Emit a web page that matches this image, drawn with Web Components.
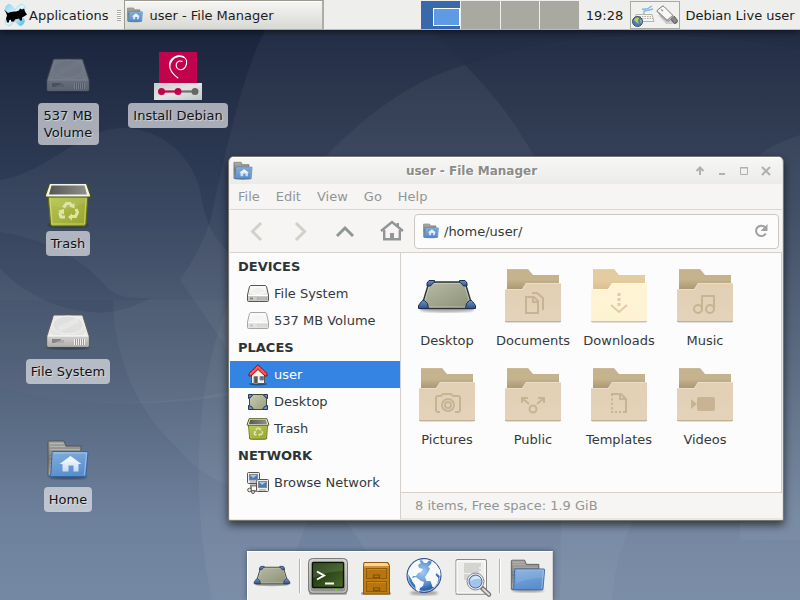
<!DOCTYPE html>
<html lang="en">
<head>
<meta charset="utf-8">
<title>Desktop</title>
<style>
  html, body { height: 100%; margin: 0; }
  body {
    font: 13px/17px "DejaVu Sans", sans-serif;
    color: #1c1c1c;
    display: flex; flex-direction: column;
    overflow: hidden;
    position: relative;
  }
</style>
</head>
<body>
<desk-wallpaper></desk-wallpaper>
<top-panel>
  <task-button icon="home-folder">user - File Manager</task-button>
  <work-pager slot="end"></work-pager>
  <time slot="clock">19:28</time>
  <span slot="user">Debian Live user</span>
</top-panel>
<desk-area>
  <desk-icon icon="drive" faded>537&nbsp;MB Volume</desk-icon>
  <desk-icon icon="trash">Trash</desk-icon>
  <desk-icon icon="drive">File System</desk-icon>
  <desk-icon icon="home-folder">Home</desk-icon>
  <desk-icon icon="installer">Install Debian</desk-icon>
  <app-window slot="window">
    <span slot="title">user - File Manager</span>
    <menu-item slot="menu">File</menu-item>
    <menu-item slot="menu">Edit</menu-item>
    <menu-item slot="menu">View</menu-item>
    <menu-item slot="menu">Go</menu-item>
    <menu-item slot="menu">Help</menu-item>
    <side-heading slot="side">DEVICES</side-heading>
    <side-item slot="side" icon="drive-small">File System</side-item>
    <side-item slot="side" icon="drive-small" faded>537 MB Volume</side-item>
    <side-heading slot="side">PLACES</side-heading>
    <side-item slot="side" icon="house" selected>user</side-item>
    <side-item slot="side" icon="desk-small">Desktop</side-item>
    <side-item slot="side" icon="trash-small">Trash</side-item>
    <side-heading slot="side">NETWORK</side-heading>
    <side-item slot="side" icon="network">Browse Network</side-item>
    <file-item icon="desktop">Desktop</file-item>
    <file-item icon="f-documents">Documents</file-item>
    <file-item icon="f-downloads">Downloads</file-item>
    <file-item icon="f-music">Music</file-item>
    <file-item icon="f-pictures">Pictures</file-item>
    <file-item icon="f-public">Public</file-item>
    <file-item icon="f-templates">Templates</file-item>
    <file-item icon="f-videos">Videos</file-item>
    <span slot="status">8 items, Free space: 1.9 GiB</span>
  </app-window>
</desk-area>
<app-dock></app-dock>

<script>
const folder = (glyph, o = {}) => `<svg viewBox="0 0 64 64"><defs>
  <linearGradient id="b" x2="0" y2="1"><stop offset="0" stop-color="${o.b1 || '#c5b38e'}"/><stop offset=".3" stop-color="${o.b1 || '#c5b38e'}"/><stop offset=".6" stop-color="${o.b2 || '#a8946f'}"/></linearGradient>
  <linearGradient id="f" x2="0" y2="1"><stop offset="0" stop-color="${o.f1 || '#e2cfb4'}"/><stop offset="1" stop-color="${o.f2 || '#e4d3ba'}"/></linearGradient></defs>
  <rect x="5" y="57" width="54" height="2" fill="#000" opacity=".12"/>
  <path d="M6 5h21l5 6h26v30H6z" fill="url(#b)"/><path d="M6 5h21" stroke="#fff" opacity=".2"/>
  <path d="M4 25h17l4-6h34q1 0 1 1v37q0 1-1 1H5q-1 0-1-1z" fill="url(#f)"/>
  <path d="M4 25.500h17.500l3.500-6h34.500" fill="none" stroke="#fff" opacity=".3"/>
  <path d="M4 57.500h56" stroke="${o.e || '#c4b092'}"/>
  <g fill="none" stroke="${o.g || '#c8b394'}" stroke-width="2">${glyph}</g></svg>`;

const blueFolder = (house) => `<svg viewBox="0 0 48 48"><defs>
  <linearGradient id="g" x2="0" y2="1"><stop offset="0" stop-color="#a5a5a1"/><stop offset=".5" stop-color="#7b7b78"/><stop offset="1" stop-color="#aaa"/></linearGradient>
  <linearGradient id="f" x2=".3" y2="1"><stop offset="0" stop-color="#83aede"/><stop offset="1" stop-color="#5a8fce"/></linearGradient>
  <linearGradient id="h" x2="0" y2="1"><stop offset="0" stop-color="#fff"/><stop offset="1" stop-color="#c6d9ef"/></linearGradient>
  <filter id="s"><feGaussianBlur stdDeviation="1"/></filter></defs>
  <ellipse cx="24" cy="41" rx="19" ry="2.500" opacity=".35" filter="url(#s)"/>
  <path d="M4 40V6q0-1 1-1h15l2 5h15v30z" fill="url(#g)" stroke="#555550"/>
  <path d="M6 7.500h13M6 10.500h15M6 13.500h30M6 17h3M6 21h3M6 25h3M6 29h3M6 33h3" stroke="#c8c8c4" opacity=".6"/>
  <path d="M9 15.500h34q1 0 1 1l-2 23q0 1-1 1H5q2-1 2-4l1-20q0-1 1-1z" fill="url(#f)" stroke="#3465a4"/>
  <path d="M10 17h32.500l-2 22" fill="none" stroke="#b7d1ef" opacity=".7"/>
  ${house ? '<path d="M26.500 20l11 8h-3v7.500h-5v-6h-5v6h-6V28h-3z" fill="url(#h)"/>' : '<path d="M9 34q10-7 34-8v-8H10z" fill="#fff" opacity=".1"/>'}</svg>`;

const trash = (small) => `<svg viewBox="${small ? '1 2 46 46' : '0 0 48 48'}"><defs>
    <linearGradient id="b" x2="1" y2="1"><stop offset="0" stop-color="#b9c954"/><stop offset="1" stop-color="#97a32e"/></linearGradient>
    <linearGradient id="i" x2="1" y2="0"><stop offset="0" stop-color="#555753"/><stop offset="1" stop-color="#8e908b"/></linearGradient>
    <filter id="s"><feGaussianBlur stdDeviation="1"/></filter></defs>
    <ellipse cx="24" cy="45" rx="20" ry="2.500" opacity=".4" filter="url(#s)"/>
    <path d="M4 14h40l-2 30q0 2-2 2H8.500q-2 0-2-2z" fill="url(#b)" stroke="#606b06" stroke-width="${small ? 2 : 1}"/>
    <path d="M6 18l2 26h32.500L42 18" fill="none" stroke="#d6e27c" opacity=".7"/>
    <path d="M8 25q16 8 33-3v-4H7z" fill="#fff" opacity=".07"/>
    <path d="M5.500 3.500h37l4 11.500v2h-45v-2z" fill="#f4f4f2" stroke="#4c5600" stroke-width="${small ? 2 : 1.2}"/>
    <path d="M7.500 5.500h33l2.500 9H5z" fill="url(#i)"/>
    <g fill="none" stroke="#dde5a8" stroke-width="3"><path d="M19.500 27.500l3-4h3.500l2 3M32 29l1.500 3.500-2 4h-4M21 37h-4l-1-3 1.500-3"/></g>
    <path d="M30.500 23v5.500l-5-2zM28 33.500v7l-4-3.500zM14 30.500l6-1.500v5.500z" fill="#dde5a8"/></svg>`;

const ICONS = {
  'home-folder': blueFolder(true),
  'folder': blueFolder(false),
  'f-documents': folder('<path d="M25 33h8l4 4v12H25z"/><path d="M32 33v5h5" stroke-width="2"/><path d="M31 29h5l6 5v12"/>'),
  'f-downloads': folder('<path d="M24 41l8 7 8-7" /><path d="M32 29v3M32 34v3M32 39v3" stroke-width="3"/>', {b1:'#e4cca2', b2:'#d9be90', f1:'#fff4d2', f2:'#fdf3d3', e:'#d9c096', g:'#e4caa4'}),
  'f-music': folder('<circle cx="25" cy="45" r="4"/><circle cx="37" cy="45" r="4"/><path d="M29 45V32h12v13"/>'),
  'f-pictures': folder('<path d="M25 49h-2q-2 0-2-2V35q0-2 2-2h3l2-2h8l2 2h5q2 0 2 2v12q0 2-2 2h-3"/><circle cx="33" cy="42" r="6"/><circle cx="33" cy="42" r="3"/>'),
  'f-public': folder('<circle cx="32" cy="46" r="3.500"/><path d="M21 40v-5h6M21 35l7 6M37 35h6v5M43 35l-7 6"/>'),
  'f-templates': folder('<path d="M24 31h10l5 5v13h-3"/><path d="M33 31v5h5" /><path d="M25 31v17" stroke-dasharray="2 2.400"/><path d="M24 49h14" stroke-dasharray="2 2"/>'),
  'f-videos': folder('<g fill="#c8b394" stroke="none"><rect x="24" y="34" width="18" height="14" rx="2"/><path d="M18 36l6 5-6 5z"/></g>'),
  'drive': `<svg viewBox="0 0 48 48"><defs>
    <linearGradient id="t" x2="0" y2="1"><stop offset="0" stop-color="#ececeb"/><stop offset="1" stop-color="#dededd"/></linearGradient>
    <linearGradient id="f" x2="0" y2="1"><stop offset="0" stop-color="#d0d0ce"/><stop offset="1" stop-color="#b0b0ad"/></linearGradient>
    <filter id="s"><feGaussianBlur stdDeviation="1"/></filter></defs>
    <ellipse cx="24" cy="39" rx="21" ry="2.500" opacity=".4" filter="url(#s)"/>
    <path d="M10.500 7h27q1 0 1.500 1.500l6 19v10.500q0 1-1 1H4q-1 0-1-1V27.500L9 8.500q.5-1.500 1.500-1.500z" fill="url(#t)" stroke="#5d5d5a"/>
    <path d="M3.500 28h41v9.500q0 1-1 1h-39q-1 0-1-1z" fill="url(#f)"/>
    <path d="M4 28h40" stroke="#fff"/><ellipse cx="24" cy="17" rx="15.500" ry="9" fill="#e0e0df" stroke="#f4f4f4" stroke-width=".8"/>
    <path d="M15 21l19-9" stroke="#fff" stroke-width="5" opacity=".25"/>
    <circle cx="7" cy="26" r=".8" fill="#fff"/><circle cx="41" cy="26" r=".8" fill="#fff"/>
    <path d="M8 31h9v4H8z" fill="#858581"/><path d="M10 35l7-3h3v3z" fill="#aaa"/>
    <path d="M30.500 31v6M32.500 31v6M34.500 31v6M36.500 31v6M38.500 31v6M40.500 31v6" stroke="#f2f2f2"/><path d="M31.500 31v6M33.500 31v6M35.500 31v6M37.500 31v6M39.500 31v6" stroke="#999"/></svg>`,
  'drive-small': `<svg viewBox="0 0 22 22"><defs><linearGradient id="t" x2="0" y2="1"><stop offset="0" stop-color="#fafafa"/><stop offset="1" stop-color="#dcdcda"/></linearGradient></defs>
    <path d="M4 2.500h14q1 0 1.500 1l2 8.500v5.500q0 1-1 1h-19q-1 0-1-1V12l2-8.500q.5-1 1.500-1z" fill="url(#t)" stroke="#555753"/><path d="M1 12.500h20" stroke="#fff"/><path d="M1 13h20v5H1z" fill="#c9c9c6"/><ellipse cx="11" cy="8" rx="7" ry="3.500" fill="#efefee" stroke="#fff" stroke-width=".7"/><path d="M3 14.500h3v2H3z" fill="#888"/><path d="M12 14v3M14 14v3M16 14v3M18 14v3" stroke="#fff"/><path d="M11 14v3M13 14v3M15 14v3M17 14v3M19 14v3" stroke="#8c8c88"/></svg>`,
  'trash': trash(false),
  'trash-small': trash(true),
  'installer': `<svg viewBox="0 0 48 48"><path d="M5 0h38v31H5z" fill="#c0034c"/><defs><linearGradient id="w" x2="1" y2="1"><stop offset="0" stop-color="#c4cccd"/><stop offset=".5" stop-color="#e2e5e5"/><stop offset="1" stop-color="#c0c6c7"/></linearGradient></defs>
    <path d="M0 31h48v17H0z" fill="url(#w)"/><path d="M7 39.500h18" stroke="#c0034c" stroke-width="2.200"/><path d="M25 39.500h16" stroke="#707070" stroke-width="2.200"/>
    <circle cx="7.500" cy="39.500" r="3.500" fill="#c0034c"/><circle cx="24" cy="39.500" r="3.500" fill="#c0034c"/><circle cx="41" cy="39.500" r="3.500" fill="#666"/>
    <path d="M24.300 26.300Q15.300 20 15.500 12.500C16 6 22 3.500 26 3.800C31 4 33.500 8 32.500 12C31.500 16 29 17.700 26.500 17.700C23 17.500 21.700 14.500 22.300 12C23 9.500 26 8.200 28.500 9.500" fill="none" stroke="#fff" stroke-width="1.100"/>
    <path d="M16 16C14.500 8 20 3.300 26 3.500Q30 3.700 31.500 6.500Q28 4.700 25 5Q17 6 16 16z" fill="#fff"/></svg>`,
  'desktop': `<svg viewBox="0 0 64 64"><defs><linearGradient id="d" x2="1" y2="1"><stop offset="0" stop-color="#babda6"/><stop offset="1" stop-color="#8b8f78"/></linearGradient>
    <linearGradient id="c" x2="0" y2="1"><stop offset="0" stop-color="#6f93c6"/><stop offset="1" stop-color="#335287"/></linearGradient><filter id="s"><feGaussianBlur stdDeviation="1.200"/></filter></defs>
    <ellipse cx="32" cy="46" rx="27" ry="2.500" opacity=".3" filter="url(#s)"/>
    <path d="M14 18h36l8 26.500H6z" fill="url(#d)" stroke="#2e3436" stroke-width="1.400"/><path d="M15 19.500h34l7 23.500H8z" fill="none" stroke="#d3d6c4" opacity=".6"/>
    <g fill="url(#c)" stroke="#1a2e56"><path d="M3.500 44.500v-3l3-4q1-2 3-1l3 3 1 5z"/><path d="M60.500 44.500v-3l-3-4q-1-2-3-1l-3 3-1 5z"/><path d="M12 22v-3l2-2.500h5.500v1.500l-3 2.500-1 1.500z"/><path d="M52 22v-3l-2-2.500h-5.500v1.500l3 2.500 1 1.500z"/></g></svg>`,
  'desk-small': `<svg viewBox="0 0 22 22"><defs><linearGradient id="d" x2="1" y2="1"><stop offset="0" stop-color="#c8ccb2"/><stop offset="1" stop-color="#989c80"/></linearGradient></defs>
    <path d="M2 4h18v14H2z" fill="#9aabc4"/><path d="M6 3.500h10l3.500 4v7l-3.500 4H6l-3.500-4v-7z" fill="url(#d)" stroke="#444a38"/><g fill="#6f8fbe" stroke="#24375d"><path d="M1.500 3.500h4l-1 2-3 2zM20.500 3.500h-4l1 2 3 2zM1.500 18.500h5l-2-3-3-1zM20.500 18.500h-5l2-3 3-1z"/></g></svg>`,
  'house': `<svg viewBox="0 0 22 22"><ellipse cx="11" cy="20" rx="9" ry="1.500" opacity=".4"/><path d="M4.500 10L11 4l6.500 6v9.500h-13z" fill="#f4f3ef" stroke="#555753"/><path d="M7 12.500h3.500v7H7z" fill="#555" stroke="#888"/><path d="M13 12.500h3.500v3.500H13z" fill="#4b6c9e" stroke="#7c8797"/>
    <path d="M11 .8L20 9.500v2.500h-2L11 5.500 4 12H2V9.500z" fill="#ef4b4b" stroke="#a40000" stroke-width=".9"/><path d="M3.500 9.800L11 2.500l7.500 7.300" fill="none" stroke="#ffb0b0" stroke-dasharray="1 1" opacity=".8"/></svg>`,
  'network': `<svg viewBox="0 0 22 22"><g fill="#eeeeec" stroke="#555753"><path d="M4 17.500v-4h5M4 19h6" fill="none" stroke="#888a85" stroke-width="2"/><rect x=".5" y=".5" width="12" height="11" rx="1"/><rect x="9.500" y="7.500" width="12" height="12" rx="1"/><circle cx="2.500" cy="18" r="1.800"/><circle cx="6" cy="20" r="1.500"/></g><rect x="2.500" y="2.500" width="8" height="5.500" fill="#4a7ab8" stroke="#888"/><rect x="11.500" y="9.500" width="8" height="6" fill="#4a7ab8" stroke="#888"/><path d="M3 3h7l-4 3zM12 10h7l-4 3z" fill="#a8c4e6"/><path d="M12 18h7M3 10h7" stroke="#999"/></svg>`,
  'xfce': `<svg viewBox="0 0 24 24"><defs><linearGradient id="x" x2="1" y2="1"><stop offset="0" stop-color="#7fd4f4"/><stop offset=".5" stop-color="#e6f6fc"/><stop offset="1" stop-color="#39b7ea"/></linearGradient></defs>
    <path d="M6 1q3 1 6 6 4-6 7-6 4 2 3 5l-5 6q4 3 5 6-2 5-5 5-2-1-5-5-4 5-6 5-4-1-4-5l5-6Q2 9 2 6q1-4 4-5z" fill="url(#x)" stroke="#8fd3ea" stroke-width=".5"/>
    <path d="M1 6.500l4 3.500q3-2 8-1.500l3-1 1-2 2 1 2-1 1 3 2 3-3 2-2 1 0 3h-2l-1-2-4 1-1 2H8l0-2-2 1v2H4l-1-4 1-3-1-3z" fill="#000"/></svg>`,
  'keyboard': `<svg viewBox="0 0 24 24"><path d="M13 11V8q6-1 9-2M11 6q5 1 10-3" fill="none" stroke="#8ab6e4" stroke-width="1.400"/><path d="M5 11.500h16l2 7H4z" fill="#f4f4f1" stroke="#b5b4ae"/><path d="M6 13.500h15M6 15.500h16" stroke="#b0b0aa" stroke-dasharray="1.500 1"/><circle cx="6.500" cy="18.500" r="5" fill="#4d7dbf" stroke="#3a4a68"/><path d="M3 17q2-4 5-2l-1 3 1 3-3-2zM9 16l2 2-1 3z" fill="#b7cf4a"/></svg>`,
  'plug': `<svg viewBox="0 0 24 24"><path d="M3 12l8 9h10l-4-6z" opacity=".15"/><path d="M15 13l5 6" stroke="#666" stroke-width="3"/><path d="M16 16.500l3.500 4q3 0 3-3L19 13" fill="#888" stroke="#555"/><path d="M9 3.500q-1-1-2 0L2.500 7q-1 1 0 2l9 8.500q2 1.500 4-1l2-2q1-1.500 0-2.500z" fill="#f8f8f7" stroke="#777"/><path d="M3 9l9 8.500 5.500-4.500" fill="none" stroke="#999" stroke-width="1.500"/><path d="M6 6.500l2 1.500" stroke="#999" stroke-width="1.500"/></svg>`,
  'terminal': `<svg viewBox="0 0 40 40"><defs><linearGradient id="m" x2="0" y2="1"><stop offset="0" stop-color="#c4c5c1"/><stop offset="1" stop-color="#8e908b"/></linearGradient><linearGradient id="g" x2="1" y2="1"><stop offset="0" stop-color="#14260c"/><stop offset="1" stop-color="#4a6b28"/></linearGradient></defs>
    <rect x="1" y="36" width="38" height="3" rx="1.500" opacity=".25"/><rect x=".5" y="2.500" width="39" height="35" rx="4" fill="url(#m)" stroke="#7a7c78"/><rect x="2" y="4" width="36" height="32" rx="3" fill="none" stroke="#e4e5e2" opacity=".7"/>
    <rect x="4.500" y="6.500" width="31" height="25" rx="1" fill="url(#g)" stroke="#0b1506" stroke-width="1.500"/><path d="M5 7h30v8q-15 0-30 7z" fill="#a4bf86" opacity=".22"/><path d="M9 15.500l7 4-7 4M17 27.500h9" fill="none" stroke="#fff" stroke-width="2"/><circle cx="28" cy="34" r="1.200" fill="#73d216"/></svg>`,
  'cabinet': `<svg viewBox="0 0 40 40"><rect x="5" y="36" width="30" height="3" rx="1.500" opacity=".3"/><path d="M8 6.500h24l1.500 3v28.500h-26V9.500z" fill="#c17d11" stroke="#8a5a08"/><path d="M8.500 7h22.500l2 3h-25z" fill="#fcd4a0"/><path d="M8 11h25" stroke="#e6a443"/><g fill="#b8750f" stroke="#8f5c08"><rect x="10.500" y="12.500" width="20" height="10"/><rect x="10.500" y="25.500" width="20" height="10"/></g><path d="M11 13.500h19M11 26.500h19" stroke="#d08a1c"/><path d="M17.500 21.500v-2.500h6v2.500zM17.500 34.500v-2.500h6v2.500z" fill="#b8750f" stroke="#7d4f04" stroke-width="1.200"/></svg>`,
  'globe': `<svg viewBox="0 0 40 40"><defs><radialGradient id="o" cx=".45" cy=".4"><stop offset="0" stop-color="#a9cbee"/><stop offset=".7" stop-color="#5b93d2"/><stop offset="1" stop-color="#2d66ad"/></radialGradient><filter id="s"><feGaussianBlur stdDeviation="1"/></filter></defs><ellipse cx="20" cy="37" rx="14" ry="2.500" opacity=".3" filter="url(#s)"/><circle cx="20" cy="19.500" r="17" fill="url(#o)" stroke="#3a4a8c"/>
    <path d="M4 18q1-7 7-12l4-2 2 3-3 2 1 3 4 1-2 3-3 1-2 3-3 0-1 2 2 2-2 0zM8 22l4-1 5 4 3 1-1 4-3 2-1 4-3-2-1-5-3-4zM18 4q4-1 7 0l-2 3-3 0zM25 15l1-3-2-1 3-3 1-3 4 3 4 6 .5 5-1 1-3-3-1 2 3 3-1 5-3 4-2 0-2-6-4 0-1.500-4z" fill="#fff" opacity=".95"/><circle cx="20" cy="19.500" r="16" fill="none" stroke="#fff" opacity=".6"/></svg>`,
  'search': `<svg viewBox="0 0 40 40"><path d="M4 38h32v1H3z" opacity=".2"/><path d="M5 3.500h28q1.500 0 1.500 1.500v32q0 1-1 1h-28q-1.500 0-1.500-1.500V5q0-1.500 1-1.500z" fill="#eeeeec" stroke="#888a85"/><path d="M5 5h28v32H5z" fill="none" stroke="#fff"/><path d="M12 8h17M12 10h17M12 12h15M12 14h17M12 16h15M12 19h5M12 21h4M12 23h3" stroke="#b9b9b6"/><path d="M30 32l7 6.500" stroke="#777" stroke-width="4.500" stroke-linecap="round"/><path d="M31 33l6 5.500" stroke="#ddd" stroke-width="2" stroke-linecap="round"/><circle cx="23.500" cy="25.500" r="8.500" fill="#eee" stroke="#888"/><circle cx="23.500" cy="25.500" r="6.500" fill="#a2c4ec" stroke="#3f6fae"/><path d="M18 25q2-5 7-5 3 1 4 3-6-1-11 2z" fill="#fff" opacity=".6"/></svg>`,
  'back': '<svg viewBox="0 0 24 24"><path d="M16 4l-8.500 8.500L16 21" fill="none" stroke="#d3cfca" stroke-width="3"/></svg>',
  'forward': '<svg viewBox="0 0 24 24"><path d="M8 4l8.500 8.500L8 21" fill="none" stroke="#d3cfca" stroke-width="3"/></svg>',
  'up': '<svg viewBox="0 0 24 24"><path d="M4 17l8-8 8 8" fill="none" stroke="#929595" stroke-width="3"/></svg>',
  'home': '<svg viewBox="0 0 24 24"><path d="M1 12L12 3l11 9" fill="none" stroke="#929595" stroke-width="2.400"/><path d="M4.200 11v9.300h15.600V11" fill="none" stroke="#929595" stroke-width="2.400"/><path d="M10 14h4v7h-4zM16.500 4H19v5l-2.500-2z" fill="#929595"/></svg>',
  'reload': '<svg viewBox="0 0 16 16"><path d="M12 4.200A5.200 5.200 0 1 0 12.800 10.500" fill="none" stroke="#a0a1a0" stroke-width="2"/><path d="M14.500 1v7h-7z" fill="#a0a1a0"/></svg>',
  'w-up': '<svg viewBox="0 0 12 12"><path d="M6 10V3M2.500 6L6 2.500 9.500 6" fill="none" stroke="#b0b0ae" stroke-width="2"/></svg>',
  'w-min': '<svg viewBox="0 0 12 12"><path d="M3 9h6" stroke="#b0b0ae" stroke-width="2"/></svg>',
  'w-max': '<svg viewBox="0 0 12 12"><path d="M2.500 2.500h7v7h-7zM2 3h8" fill="none" stroke="#b0b0ae"/></svg>',
  'w-close': '<svg viewBox="0 0 12 12"><path d="M2 2l8 8M10 2l-8 8" stroke="#b0b0ae" stroke-width="2"/></svg>'
};

function define(name, html, setup) {
  const t = document.createElement('template');
  t.innerHTML = `<style>
    :host, * { box-sizing: border-box; }
    button, input { font: inherit; color: inherit; background: none; border: 0; padding: 0; margin: 0; min-width: 0; }
    button { display: flex; align-items: center; justify-content: center; }
  </style>` + html;
  customElements.define(name, class extends HTMLElement {
    connectedCallback() {
      if (this.shadowRoot) return;
      const root = this.attachShadow({ mode: 'open' });
      root.append(t.content.cloneNode(true));
      if (setup) setup(this, root);
    }
  });
}
const setIcon = (host, root) => root.querySelector('ui-icon').setAttribute('name', host.getAttribute('icon'));

customElements.define('ui-icon', class extends HTMLElement {
  static observedAttributes = ['name'];
  attributeChangedCallback() {
    const root = this.shadowRoot || this.attachShadow({ mode: 'open' });
    root.innerHTML = `<style>:host { display: block; flex: none; width: var(--size, 24px); height: var(--size, 24px); } svg { display: block; width: 100%; height: 100%; overflow: visible; }</style>` + (ICONS[this.getAttribute('name')] || '');
    const svg = root.querySelector('svg');
    if (svg) svg.setAttribute('aria-hidden', 'true');
  }
});

define('desk-wallpaper', `<style>
  :host { position: absolute; inset: 0; z-index: -1; background: linear-gradient(#1a243d 5%, #253149 18%, #33415b 36%, #485770 54%, #5a6b84 70%, #6d809b 86%, #7689a4); }
  svg { width: 100%; height: 100%; display: block; }
  path { fill: #fff; fill-opacity: .045; }
  .dark { fill: #16233f; fill-opacity: .12; }
  </style>
  <svg viewBox="0 0 800 600" preserveAspectRatio="none" aria-hidden="true">
    <path d="M0 180C50 172 80 128 122 128C165 128 193 160 200 190C206 225 212 236 232 256V395Q110 415 0 388z"/>
    <path d="M265 30C240 80 224 160 211 218C204 240 195 258 180 280L400 600H800V30z"/>
    <path d="M325 157C360 120 410 80 465 65C500 100 520 130 545 175H320z"/>
    <path d="M435 30C445 45 455 55 465 65C560 28 700 28 800 50V30z" class="dark"/>
    <path d="M113 300C113 350 135 410 175 445C190 465 210 478 232 487V300z"/>
    <path d="M230 300C195 380 190 500 212 600H275C290 570 300 540 310 515H232z"/>
    <path d="M800 135C770 145 755 155 740 175V540H800z"/>
    <path d="M560 510C562 540 561 560 560 600H612Q615 550 640 510z"/>
    <path class="dark" d="M0 232C50 240 85 262 105 285Q115 300 150 298Q110 322 60 306Q20 292 0 268z"/>
    <path class="dark" d="M0 388Q110 415 228 392V300H0z" style="fill-opacity:.05"/>
  </svg>`);

define('top-panel', `<style>
  :host { display: flex; flex: none; align-items: center; height: 30px; background: #eeeeec; box-shadow: inset 0 -1px #bdbbb3, 0 2px 6px #0008; white-space: nowrap; }
  .apps { --size: 24px; height: 29px; padding-left: 3px; gap: 2px; }
  .grip { flex: none; width: 4px; height: 11px; margin: 0 3px 0 9px; background: repeating-linear-gradient(#aaa9a3 0 1px, #fff 1px 2px); }
  .space { flex: 1; }
  .clock { width: 51px; text-align: center; }
  .tray { display: flex; align-items: center; justify-content: space-around; width: 50px; height: 28px; border: 1px solid #aaa9a1; --size: 24px; background: #f1f1ef; }
  .user { width: 120px; height: 28px; }
  </style>
  <button class="apps"><ui-icon name="xfce"></ui-icon>Applications</button><span class="grip"></span>
  <slot></slot><span class="space"></span><slot name="end"></slot>
  <span class="clock"><slot name="clock"></slot></span>
  <span class="tray"><ui-icon name="keyboard"></ui-icon><ui-icon name="plug"></ui-icon></span>
  <button class="user"><slot name="user"></slot></button>`);

define('task-button', `<style>
  :host { display: block; width: 200px; }
  button { width: 100%; height: 30px; justify-content: flex-start; gap: 5px; padding: 0 1px; --size: 18px; background: linear-gradient(#f6f6f4, #d8d8d4); border: 1px solid #9c9b92; border-width: 1px 2px 1px 1px; border-color: #9c9b92 #aeada5 #aeada5 #9c9b92; box-shadow: inset 0 1px #fff; }
  </style><button><ui-icon></ui-icon><slot></slot></button>`, setIcon);

define('work-pager', `<style>
  :host { display: grid; grid-template-columns: repeat(4, 1fr); gap: 1px; width: 158px; height: 28px; }
  button { background: #a9a9a1; height: 28px; }
  .on { background: #3869ab; justify-content: flex-end; padding: 3px 0 0; }
  .on span { width: 27px; height: 18px; background: #5f9ae5; border: 1px solid #fff; }
  </style><button class="on" aria-label="Workspace 1"><span></span></button><button aria-label="Workspace 2"></button><button aria-label="Workspace 3"></button><button aria-label="Workspace 4"></button>`);

define('desk-area', `<style>
  :host { display: grid; flex: 1; min-height: 0; position: relative; padding: 22px 13px 0; grid-template-rows: repeat(4, 128px); grid-auto-flow: column; grid-auto-columns: 110px; }
  ::slotted(app-window) { position: absolute; inset: 126px 16px 79px 228px; }
  </style><slot></slot><slot name="window"></slot>`);

define('desk-icon', `<style>
  :host { display: block; --size: 48px; }
  button { flex-direction: column; gap: 3px; margin: 0 auto; max-width: 102px; }
  :host([faded]) ui-icon { opacity: .4; }
  span { background: #e6e8ebad; color: #101214; border-radius: 4px; padding: 4px 5px; max-width: 102px; text-shadow: 1px 1px 1px #fff8; }
  :host([faded]) span { width: min-content; min-width: 61px; }
  </style><button><ui-icon></ui-icon><span><slot></slot></span></button>`, setIcon);

define('menu-item', `<style>:host { display: block; } button { height: 25px; padding: 0 8px; }</style><button><slot></slot></button>`);

define('side-heading', `<style>:host { display: block; font-weight: bold; line-height: 27px; padding-left: 8px; color: #2e3436; }</style><slot></slot>`);

define('side-item', `<style>
  :host { display: block; --size: 22px; }
  button { width: 100%; height: 27px; justify-content: flex-start; gap: 5px; padding-left: 17px; }
  :host([selected]) button { background: #3584e4; color: #fff; }
  :host([faded]) ui-icon { opacity: .5; }
  </style><button><ui-icon></ui-icon><slot></slot></button>`, setIcon);

define('file-item', `<style>
  :host { display: block; --size: 64px; }
  button { width: 100%; flex-direction: column; gap: 4px; }
  </style><button><ui-icon></ui-icon><span><slot></slot></span></button>`, setIcon);

define('app-window', `<style>
  :host { display: flex; flex-direction: column; background: #f6f5f4; color: #36393b; border: 1px solid #77776f; border-radius: 6px 6px 2px 2px; box-shadow: 0 4px 9px #0009, inset 0 -2px #e8e7e3, inset 1px 0 #eeeeea, inset -1px 0 #e2e1dd; overflow: hidden; padding: 0 1px 1px; }
  header { display: flex; align-items: center; height: 27px; flex: none; padding: 0 5px 0 2px; background: linear-gradient(#f7f7f6, #ebebe9); box-shadow: inset 0 1px #fff; }
  header > ui-icon { --size: 22px; }
  h1 { flex: 1; margin: 0; font-size: 12px; line-height: 16px; text-align: center; color: #8b8c88; text-shadow: 1px 1px #fff; }
  .ctl { width: 22px; height: 22px; --size: 12px; }
  nav { display: flex; flex: none; color: #929595; border-bottom: 1px solid #dad6d2; }
  .tools { display: grid; grid-template-columns: 44px 42px 48px 45px 1fr; align-items: center; height: 43px; flex: none; padding: 0 3px 0 5px; --size: 24px; border-bottom: 1px solid #d5d0cc; }
  .tools button { height: 34px; }
  .path { display: flex; align-items: center; gap: 4px; height: 35px; padding: 0 9px 0 7px; background: #fcfcfc; border: 1px solid #cdc7c2; border-radius: 4px; --size: 18px; }
  .path input { flex: 1; outline: 0; }
  .path button { --size: 16px; }
  .body { display: grid; grid-template-columns: 171px 1fr; flex: 1; min-height: 0; }
  aside { background: #fcfcfc; border-right: 1px solid #d5d0cc; }
  main { display: flex; flex-direction: column; min-height: 0; }
  .files { flex: 1; display: grid; grid-template-columns: repeat(auto-fill, 86px); grid-auto-rows: 99px; align-content: start; padding: 11px 3px 0; background: #fcfcfc; border-right: 1px solid #d5d0cc; border-bottom: 1px solid #d5d0cc; }
  footer { flex: none; height: 26px; line-height: 25px; padding-left: 14px; color: #929595; }
  </style>
  <header><ui-icon name="home-folder"></ui-icon><h1><slot name="title"></slot></h1>
    <button class="ctl" aria-label="Shade"><ui-icon name="w-up"></ui-icon></button>
    <button class="ctl" aria-label="Minimize"><ui-icon name="w-min"></ui-icon></button>
    <button class="ctl" aria-label="Maximize"><ui-icon name="w-max"></ui-icon></button>
    <button class="ctl" aria-label="Close"><ui-icon name="w-close"></ui-icon></button></header>
  <nav><slot name="menu"></slot></nav>
  <div class="tools">
    <button aria-label="Back"><ui-icon name="back"></ui-icon></button>
    <button aria-label="Forward"><ui-icon name="forward"></ui-icon></button>
    <button aria-label="Up"><ui-icon name="up"></ui-icon></button>
    <button aria-label="Home"><ui-icon name="home"></ui-icon></button>
    <div class="path"><ui-icon name="home-folder"></ui-icon><input aria-label="Location" value="/home/user/"><button aria-label="Reload"><ui-icon name="reload"></ui-icon></button></div>
  </div>
  <div class="body"><aside><slot name="side"></slot></aside>
    <main><div class="files"><slot></slot></div><footer><slot name="status"></slot></footer></main></div>`);

define('app-dock', `<style>
  :host { position: absolute; left: 0; right: 0; bottom: 0; display: flex; justify-content: center; pointer-events: none; }
  div { display: flex; align-items: center; height: 49px; background: #eeeeec; border: 1px solid #fff; border-bottom: 0; border-right-color: #d0d0cc; box-shadow: 0 0 5px #0006; pointer-events: auto; --size: 40px; }
  button { width: 48px; height: 48px; }
  hr { width: 2px; height: 34px; margin: 0 3px; border: 0; background: linear-gradient(90deg, #b4b3ac 50%, #fff 50%); }
  </style>
  <div role="toolbar" aria-label="Launchers">
    <button aria-label="Show Desktop"><ui-icon name="desktop"></ui-icon></button><hr>
    <button aria-label="Terminal"><ui-icon name="terminal"></ui-icon></button>
    <button aria-label="File Manager"><ui-icon name="cabinet"></ui-icon></button>
    <button aria-label="Web Browser"><ui-icon name="globe"></ui-icon></button>
    <button aria-label="Application Finder"><ui-icon name="search"></ui-icon></button><hr>
    <button aria-label="Directory"><ui-icon name="folder"></ui-icon></button>
  </div>`);
</script>
</body>
</html>
